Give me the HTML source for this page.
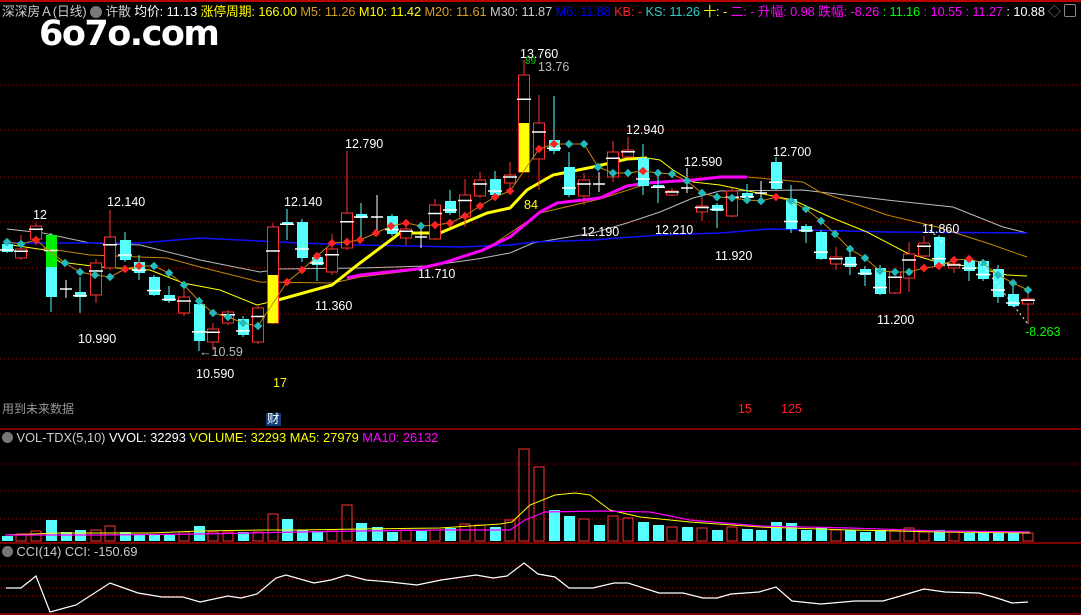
<!DOCTYPE html>
<html><head><meta charset="utf-8"><style>
html,body{margin:0;padding:0;background:#000;width:1081px;height:615px;overflow:hidden;font-family:"Liberation Sans","Noto Sans CJK SC",sans-serif}
#w{position:relative;width:1081px;height:615px}
.t{position:absolute;white-space:nowrap;font-size:12.8px;line-height:14px}
.l{position:absolute;white-space:nowrap;font-size:12.5px;color:#fff;line-height:13px}
svg{position:absolute;left:0;top:0}
</style></head><body><div id="w">
<svg id="s" width="1081" height="615"></svg>
<div class="t" style="left:2px;top:5px;color:#ccc;letter-spacing:-0.1px">深深房Ａ(日线) <span style="display:inline-block;width:12px;height:12px;border-radius:6px;background:#777;vertical-align:-2px"></span> 许散 <span style="color:#fff">均价: 11.13</span> <span style="color:#ff0">涨停周期: 166.00</span> <span style="color:#d9a020">M5: 11.26</span> <span style="color:#ff0">M10: 11.42</span> <span style="color:#d9a020">M20: 11.61</span> <span style="color:#ccc">M30: 11.87</span> <span style="color:#00f">M6: 11.88</span> <span style="color:#f22">KB: -</span> <span style="color:#3cc">KS: 11.26</span> <span style="color:#ff0">十: -</span> <span style="color:#f0f">二: -</span> <span style="color:#f0f">升幅: 0.98</span> <span style="color:#f0f">跌幅: -8.26</span> <span style="color:#0f0">: 11.16</span> <span style="color:#f0f">: 10.55</span> <span style="color:#f0f">: 11.27</span> <span style="color:#fff">: 10.88</span></div>
<div class="t" style="left:1048px;top:5px;color:#888">◇</div>
<div style="position:absolute;left:1064px;top:4px;width:10px;height:11px;border:1px solid #888;border-radius:2px"></div>
<div style="position:absolute;left:39px;top:14px;font:bold 35px 'DejaVu Sans','Liberation Sans',sans-serif;color:#fff;letter-spacing:-1.5px">6o7o.com</div>
<div class="l" style="left:33px;top:209px">12</div>
<div class="l" style="left:107px;top:196px">12.140</div>
<div class="l" style="left:78px;top:333px">10.990</div>
<div class="l" style="left:199px;top:346px;color:#bbb">←10.59</div>
<div class="l" style="left:196px;top:368px">10.590</div>
<div class="l" style="left:273px;top:377px;color:#ff0">17</div>
<div class="l" style="left:284px;top:196px">12.140</div>
<div class="l" style="left:315px;top:300px">11.360</div>
<div class="l" style="left:345px;top:138px">12.790</div>
<div class="l" style="left:418px;top:268px">11.710</div>
<div class="l" style="left:520px;top:48px">13.760</div>
<div class="l" style="left:538px;top:61px;color:#bbb">13.76</div>
<div class="l" style="left:525px;top:55px;color:#0c0;font-size:10px">89</div>
<div class="l" style="left:524px;top:199px;color:#ff0">84</div>
<div class="l" style="left:581px;top:226px">12.190</div>
<div class="l" style="left:626px;top:124px">12.940</div>
<div class="l" style="left:655px;top:224px">12.210</div>
<div class="l" style="left:684px;top:156px">12.590</div>
<div class="l" style="left:773px;top:146px">12.700</div>
<div class="l" style="left:715px;top:250px">11.920</div>
<div class="l" style="left:922px;top:223px">11.860</div>
<div class="l" style="left:877px;top:314px">11.200</div>
<div class="l" style="left:1025px;top:326px;color:#0f0">-8.263</div>
<div class="l" style="left:2px;top:403px;color:#999;font-size:12px">用到未来数据</div>
<div class="l" style="left:266px;top:413px;background:#123e7a;padding:0 1px">财</div>
<div class="l" style="left:738px;top:403px;color:#f22">15</div>
<div class="l" style="left:781px;top:403px;color:#f22">125</div>
<div class="t" style="left:2px;top:431px;color:#ccc"><span style="display:inline-block;width:11px;height:11px;border-radius:6px;background:#777;vertical-align:-1px"></span> VOL-TDX(5,10) <span style="color:#fff">VVOL: 32293</span> <span style="color:#ff0">VOLUME: 32293 MA5: 27979</span> <span style="color:#f0f">MA10: 26132</span></div>
<div class="t" style="left:2px;top:545px;color:#ccc"><span style="display:inline-block;width:11px;height:11px;border-radius:6px;background:#777;vertical-align:-1px"></span> CCI(14) CCI: -150.69</div>
</div>
<script>
var s='';
function L(x1,y1,x2,y2,c,w,d){s+='<line x1="'+x1+'" y1="'+y1+'" x2="'+x2+'" y2="'+y2+'" stroke="'+c+'" stroke-width="'+(w||1)+'"'+(d?' stroke-dasharray="'+d+'"':'')+'/>';}
function P(p,c,w){s+='<polyline fill="none" stroke="'+c+'" stroke-width="'+w+'" points="'+p.map(function(a){return a.join(',')}).join(' ')+'"/>';}
L(0,1,1081,1,'#b00',2);
[85,130,177,222,268,314,359].forEach(function(y){L(0,y,1081,y,'#a00',1,'1 3')});
[464,491,519].forEach(function(y){L(0,y,1081,y,'#a00',1,'1 3')});
[566,579,588,596].forEach(function(y){L(0,y,1081,y,'#a00',1,'1 3')});
L(0,429,1081,429,'#a00',1.5);L(0,543,1081,543,'#a00',1.5);L(0,614,1081,614,'#a00',1.5);
P([[7,229],[43,233],[90,243],[140,245],[200,260],[260,272],[280,269],[360,268],[427,266],[477,259],[510,253],[533,243],[593,233],[627,223],[660,212],[693,198],[720,191],[803,190],[887,200],[953,207],[1003,227],[1027,233]],'#bbb',1);
P([[5,243],[140,243],[200,238],[300,243],[360,245],[460,247],[510,245],[533,242],[593,240],[660,235],[720,233],[770,229],[887,232],[1027,233]],'#11f',1.5);
P([[43,248],[90,255],[167,258],[200,267],[260,282],[333,283],[360,277],[417,270],[483,251],[540,213],[600,199],[647,184],[720,177],[747,177],[803,182],[820,192],[853,203],[887,215],[937,227],[987,243],[1027,257]],'#c8860a',1);
P([[5,244],[45,250],[60,262],[100,267],[150,270],[183,283],[220,290],[257,305],[270,302],[278,300]],'#ff0',1);
P([[278,300],[332,285],[360,263],[400,233],[440,233],[487,213],[510,208],[527,190],[553,175],[593,167],[627,159],[647,158]],'#ff0',3);
P([[647,158],[660,160],[673,170],[693,182],[720,185],[753,192],[793,200],[830,217],[867,232],[907,253],[937,262],[973,267],[1007,275],[1027,276]],'#ff0',1);
P([[347,278],[360,275],[417,269],[443,263],[483,250],[510,237],[540,212],[557,203],[600,198],[627,186],[647,183],[693,180],[720,177],[747,177]],'#f0f',3);
var C=[[7,244,252,240,253,'c'],[21,249,258,235,260,'r'],[36,226,239,223,245,'r'],[51,235,297,233,312,'g'],[66,288,290,280,298,'x'],[80,292,297,277,313,'c'],[96,263,295,259,303,'r'],[110,237,268,210,270,'r'],[125,240,260,232,262,'c'],[139,262,273,255,280,'c'],[154,277,295,275,296,'c'],[169,295,301,286,303,'c'],[184,297,313,288,316,'r'],[199,304,341,300,351,'c'],[213,329,342,323,350,'r'],[228,312,323,310,325,'r'],[243,319,335,316,337,'c'],[258,308,342,305,344,'r'],[273,227,323,223,324,'y'],[287,222,225,209,240,'c'],[302,222,258,219,262,'c'],[317,257,265,255,281,'c'],[332,249,272,234,275,'r'],[347,213,248,151,250,'r'],[361,214,218,203,238,'c'],[377,216,218,195,233,'x'],[392,216,234,214,236,'c'],[406,229,238,223,245,'r'],[421,236,240,225,248,'x'],[435,205,239,199,240,'r'],[450,201,213,190,215,'c'],[465,195,217,179,227,'r'],[480,180,196,172,198,'r'],[495,179,195,171,196,'c'],[510,175,183,162,193,'r'],[524,75,172,60,173,'y'],[539,123,159,95,190,'r'],[554,140,151,96,154,'c'],[569,167,195,152,197,'c'],[584,180,196,173,205,'r'],[599,183,187,172,192,'x'],[613,152,177,141,182,'r'],[628,150,157,137,158,'r'],[643,158,186,144,195,'c'],[658,185,188,172,203,'c'],[672,191,195,188,196,'r'],[687,187,189,168,193,'x'],[702,206,212,195,221,'r'],[717,205,211,203,228,'c'],[732,191,216,188,217,'r'],[747,193,198,184,203,'c'],[761,192,194,181,197,'x'],[776,162,189,157,190,'c'],[791,199,229,185,233,'c'],[806,226,232,224,243,'c'],[821,232,259,230,260,'c'],[836,257,264,247,270,'r'],[850,257,267,253,275,'c'],[865,269,275,266,286,'c'],[880,268,294,265,295,'c'],[895,272,293,270,294,'r'],[909,254,278,242,292,'r'],[924,243,256,236,258,'r'],[939,237,266,235,268,'c'],[954,264,268,262,273,'r'],[969,260,271,258,281,'c'],[983,261,279,259,281,'c'],[998,269,297,265,303,'c'],[1013,294,306,287,307,'c'],[1028,299,304,293,324,'r']];
C.forEach(function(c){var x=c[0],t=c[1],b=c[2],col=c[5]=='r'||c[5]=='y'?'#f33':c[5]=='x'?'#fff':'#5ff';
 L(x,c[3],x,c[4],col,1);
 if(c[5]=='r'){s+='<rect x="'+(x-5.5)+'" y="'+t+'" width="11" height="'+(b-t)+'" fill="#000" stroke="#f33"/>';}
 else if(c[5]=='y'){s+='<rect x="'+(x-5.5)+'" y="'+t+'" width="11" height="'+(b-t)+'" fill="#000" stroke="#f33"/>';var yt=(x<300?275:123);s+='<rect x="'+(x-5)+'" y="'+yt+'" width="10" height="'+(b-yt)+'" fill="#ff0"/>';}
 else if(c[5]=='g'){s+='<rect x="'+(x-5)+'" y="235" width="11" height="32" fill="#0e0"/><rect x="'+(x-5)+'" y="267" width="11" height="30" fill="#5ff"/>';}
 else if(c[5]=='x'){L(x-6,t+1,x+6,t+1,'#fff',1.5);}
 else{s+='<rect x="'+(x-5)+'" y="'+t+'" width="11" height="'+Math.max(2,b-t)+'" fill="#5ff"/>';}
 if(c[5]!='x'){var m=(t+b)/2+(c[5]=='c'?(b-t)/4:-(b-t)/4);L(x-7,m,x+7,m,'#fff',1.5);}
});
var D=[[7,242],[21,244],[36,240],[65,263],[80,272],[95,275],[110,277],[125,269],[139,266],[154,266],[169,273],[184,285],[199,301],[213,313],[228,317],[243,323],[258,326],[287,282],[302,270],[317,256],[332,243],[347,242],[360,240],[376,233],[391,226],[406,223],[421,226],[435,225],[450,223],[465,216],[480,206],[495,197],[510,191],[539,149],[554,144],[569,144],[584,144],[598,167],[613,173],[628,173],[643,171],[658,173],[672,174],[687,181],[702,193],[717,197],[732,198],[747,200],[761,201],[776,197],[791,201],[806,209],[821,221],[835,234],[850,249],[865,258],[880,271],[895,272],[909,272],[924,268],[939,266],[954,260],[969,259],[983,263],[998,275],[1013,283],[1028,290]];
P(D,'#c8860a',1);
D.forEach(function(p,i){var up=i>0&&p[1]<D[i-1][1];var c=up?'#f22':'#2bb';s+='<rect x="'+(p[0]-3)+'" y="'+(p[1]-3)+'" width="6" height="6" fill="'+c+'" transform="rotate(45 '+p[0]+' '+p[1]+')"/>';});
L(930,230,945,245,'#fff',1,'2 3');L(980,262,1028,324,'#fff',1,'2 3');
var V=[5,7,10,21,9,11,11,15,9,7,6,6,9,15,9,9,9,9,27,22,11,10,10,36,18,14,9,11,10,11,13,17,16,14,21,92,74,31,25,22,16,25,23,19,16,14,14,13,11,14,12,11,19,18,11,14,11,11,9,11,11,13,9,11,9,8,9,8,9,8];
var base=541;
C.forEach(function(c,i){var h=V[i]||8;var red=(c[5]=='r'||c[5]=='y');
 if(red)s+='<rect x="'+(c[0]-5)+'" y="'+(base-h)+'" width="10" height="'+h+'" fill="none" stroke="#f33"/>';
 else s+='<rect x="'+(c[0]-5)+'" y="'+(base-h)+'" width="11" height="'+h+'" fill="#5ff"/>';});
P([[5,535],[60,533],[150,533],[200,531],[260,530],[300,530],[360,529],[440,528],[500,524],[512,522],[530,505],[555,495],[575,493],[590,495],[610,510],[640,517],[690,522],[760,527],[850,530],[940,532],[1030,533]],'#ff0',1);
P([[5,535],[100,535],[200,534],[300,532],[360,531],[440,530],[510,530],[525,520],[545,512],[600,511],[650,512],[690,520],[760,526],[850,528],[940,531],[1030,532]],'#f0f',1.2);
P([[6,588],[21,588],[36,576],[50,612],[76,605],[110,583],[138,593],[162,597],[183,597],[200,602],[228,596],[241,598],[257,594],[276,578],[286,575],[314,583],[331,580],[347,575],[366,580],[390,582],[417,585],[441,580],[476,575],[493,578],[507,576],[524,563],[538,574],[555,577],[569,588],[593,588],[614,583],[628,583],[659,593],[683,593],[703,598],[717,598],[731,594],[759,592],[776,587],[792,601],[821,604],[855,601],[883,601],[897,597],[924,589],[945,592],[979,593],[997,598],[1012,603],[1028,602]],'#fff',1.2);
document.getElementById('s').innerHTML=s;
</script>
</body></html>
